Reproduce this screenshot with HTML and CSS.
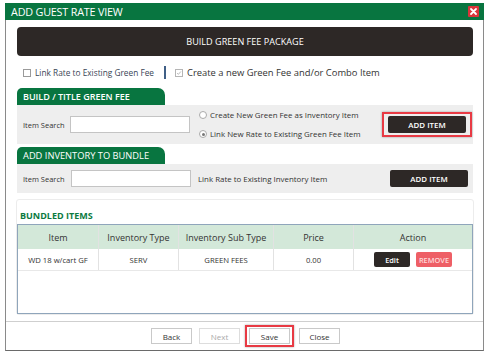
FILE: index.html
```html
<!DOCTYPE html>
<html>
<head>
<meta charset="utf-8">
<link rel="stylesheet" href="styles.css">
</head>
<body>
<div class="dialog">
  <div class="titlebar">
    <span class="title">ADD GUEST RATE VIEW</span>
    <span class="close"><svg width="11" height="11" viewBox="0 0 11 11"><path d="M3 3 L8 8 M8 3 L3 8" stroke="#fff" stroke-width="1.8" stroke-linecap="round"/></svg></span>
  </div>
  <div class="content">
    <div class="package">BUILD GREEN FEE PACKAGE</div>
    <div class="options">
      <span class="cb"></span><span class="opt-a">Link Rate to Existing Green Fee</span>
      <span class="divider"></span>
      <span class="cb checked"><svg width="8" height="8" viewBox="0 0 8 8"><path d="M1.5 4 L3.2 5.8 L6.5 2" fill="none" stroke="#999" stroke-width="0.9"/></svg></span><span class="opt-b">Create a new Green Fee and/or Combo Item</span>
    </div>

    <div class="tab">BUILD / TITLE GREEN FEE</div>
    <div class="panel panel-tall">
      <span class="label">Item Search</span>
      <span class="input"></span>
      <div class="radios">
        <div class="radio-row"><span class="radio"></span>Create New Green Fee as Inventory Item</div>
        <div class="radio-row"><span class="radio on"></span>Link New Rate to Existing Green Fee Item</div>
      </div>
      <span class="hl"><span class="btn-dark">ADD ITEM</span></span>
    </div>

    <div class="tab tab2">ADD INVENTORY TO BUNDLE</div>
    <div class="panel panel-short">
      <span class="label">Item Search</span>
      <span class="input"></span>
      <span class="link-text">Link Rate to Existing Inventory Item</span>
      <span class="btn-dark solo">ADD ITEM</span>
    </div>

    <div class="bundled">
      <div class="bundled-title">BUNDLED ITEMS</div>
      <div class="table">
        <div class="row head">
          <div class="c c1">Item</div>
          <div class="c c2">Inventory Type</div>
          <div class="c c3">Inventory Sub Type</div>
          <div class="c c4">Price</div>
          <div class="c c5">Action</div>
        </div>
        <div class="row body">
          <div class="c c1">WD 18 w/cart GF</div>
          <div class="c c2">SERV</div>
          <div class="c c3">GREEN FEES</div>
          <div class="c c4">0.00</div>
          <div class="c c5"><span class="edit">Edit</span><span class="remove">REMOVE</span></div>
        </div>
      </div>
    </div>
  </div>
  <div class="footer">
    <span class="fbtn">Back</span>
    <span class="fbtn disabled">Next</span>
    <span class="save-hl"><span class="fbtn">Save</span></span>
    <span class="fbtn">Close</span>
  </div>
</div>
</body>
</html>
```

FILE: styles.css
```css
* { box-sizing: border-box; }
html, body { margin: 0; padding: 0; background: #fff; }
body { font-family: "Open Sans", "Noto Sans", sans-serif; color: #333; }

.dialog {
  margin: 3px 0 0 5px;
  width: 479px;
  height: 348px;
  border-left: 1px solid #8a8a8a;
  border-right: 1px solid #8a8a8a;
  border-bottom: 1px solid #6a6a6a;
  display: flex;
  flex-direction: column;
}

.titlebar {
  height: 18px;
  background: #087540;
  margin-left: -1px;
  margin-right: -1px;
  display: flex;
  align-items: center;
  justify-content: space-between;
  padding: 0 5px 0 6px;
}
.title { color: #fff; font-size: 10.8px; letter-spacing: -0.2px; }
.close {
  width: 11px; height: 11px; background: #d9343a;
  display: flex; align-items: center; justify-content: center;
  border-radius: 1px;
}

.content { padding: 7px 10px 0 11px; flex: 1; display: flex; flex-direction: column; }

.package {
  height: 29px;
  background: #2d2826;
  border-radius: 4px;
  color: #fff;
  font-size: 9.1px;
  display: flex; align-items: center; justify-content: center;
}

.options {
  height: 32px;
  display: flex;
  align-items: center;
  padding-left: 6px;
  padding-top: 1px;
}
.cb {
  width: 8px; height: 8px; border: 1px solid #9a9a9a; background: #fff;
  display: inline-flex; align-items: center; justify-content: center;
  margin-right: 4px;
}
.cb.checked { border-color: #b5b5b5; }
.opt-a { color: #3a4556; font-size: 8.3px; }
.divider { width: 2px; height: 13px; background: #3f5f86; margin: 0 9px 0 10px; }
.opt-b { color: #333; font-size: 9.4px; }

.tab {
  width: 148px; height: 17px;
  background: #087540;
  border-radius: 5px 7px 0 0;
  color: #fff;
  font-size: 9px;
  font-weight: 600;
  padding-left: 6px;
  display: flex; align-items: center;
}
.tab2 { margin-top: 3px; font-weight: 400; font-size: 9.3px; }

.panel {
  background: #eeeeee;
  display: flex;
  align-items: center;
  padding-left: 6px;
  font-size: 7.5px;
}
.panel-tall { height: 39px; }
.panel-short { height: 29px; }
.label { width: 47px; color: #333; }
.input { width: 120px; height: 17px; background: #fff; border: 1px solid #c4c4c4; }
.panel-short .input { margin-left: 1px; }
.radios { margin-left: 9px; display: flex; flex-direction: column; gap: 9px; width: 183px; }
.radio-row { display: flex; align-items: center; font-size: 7.9px; }
.radio {
  width: 8px; height: 8px; border-radius: 50%; border: 1px solid #aaa; background: #fff; margin-right: 3px;
  display: inline-block; position: relative;
}
.radio.on::after {
  content: ""; position: absolute; left: 1.5px; top: 1.5px; width: 3px; height: 3px; border-radius: 50%; background: #777;
}
.hl {
  border: 2px solid #e83a44;
  padding: 2px 4px;
  box-shadow: 0 0 2px rgba(0,0,0,0.35);
  display: inline-flex;
}
.btn-dark {
  width: 78px; height: 17px; background: #2d2826; color: #fff; border-radius: 2px;
  font-size: 7.9px; font-weight: 600;
  display: inline-flex; align-items: center; justify-content: center;
}
.link-text { margin-left: 7px; width: 192px; font-size: 7.9px; }
.solo { margin-left: 0; }

.bundled {
  margin-top: 6px;
  border: 1px solid #ececec;
  border-radius: 3px;
  flex: 1;
  display: flex; flex-direction: column;
  margin-left: -1px;
  margin-right: -1px;
}
.bundled-title {
  color: #0c7a3f; font-size: 9px; font-weight: 700;
  padding: 9px 0 0 3px; height: 24px;
}
.table {
  border: 1px solid #8fa5bb;
  height: 90px;
}
.row { display: flex; }
.head { height: 24px; background: #d3e8d9; font-size: 9px; color: #333; }
.body { height: 22px; font-size: 7.7px; border-bottom: 1px solid #e8e8e8; }
.c { display: flex; align-items: center; justify-content: center; border-right: 1px solid #e2e2e2; }
.c1 { width: 81px; }
.c2 { width: 80px; }
.c3 { width: 95px; }
.c4 { width: 80px; }
.c5 { flex: 1; border-right: none; gap: 6px; }
.edit {
  width: 36px; height: 15px; background: #2d2826; color: #fff; border-radius: 2px;
  font-size: 7.4px; font-weight: 600; display: inline-flex; align-items: center; justify-content: center;
}
.remove {
  width: 36px; height: 15px; background: #ee5f66; color: #ffd9db; border-radius: 2px;
  font-size: 7.4px; font-weight: 600; display: inline-flex; align-items: center; justify-content: center;
}

.footer {
  height: 30px;
  border-top: 1px solid #cfcfcf;
  margin-top: 6px;
  display: flex;
  align-items: center;
  justify-content: center;
  gap: 7px;
  padding-left: 2px;
}
.fbtn {
  width: 41px; height: 16px; border: 1px solid #c9c9c9; background: #fff;
  font-size: 8px; color: #333;
  display: inline-flex; align-items: center; justify-content: center;
}
.fbtn.disabled { color: #aaa; border-color: #ddd; }
.save-hl {
  border: 2px solid #e83a44; padding: 1px 2px;
  box-shadow: 0 0 2px rgba(0,0,0,0.35);
  display: inline-flex;
  margin: 0 -2px;
}
```
